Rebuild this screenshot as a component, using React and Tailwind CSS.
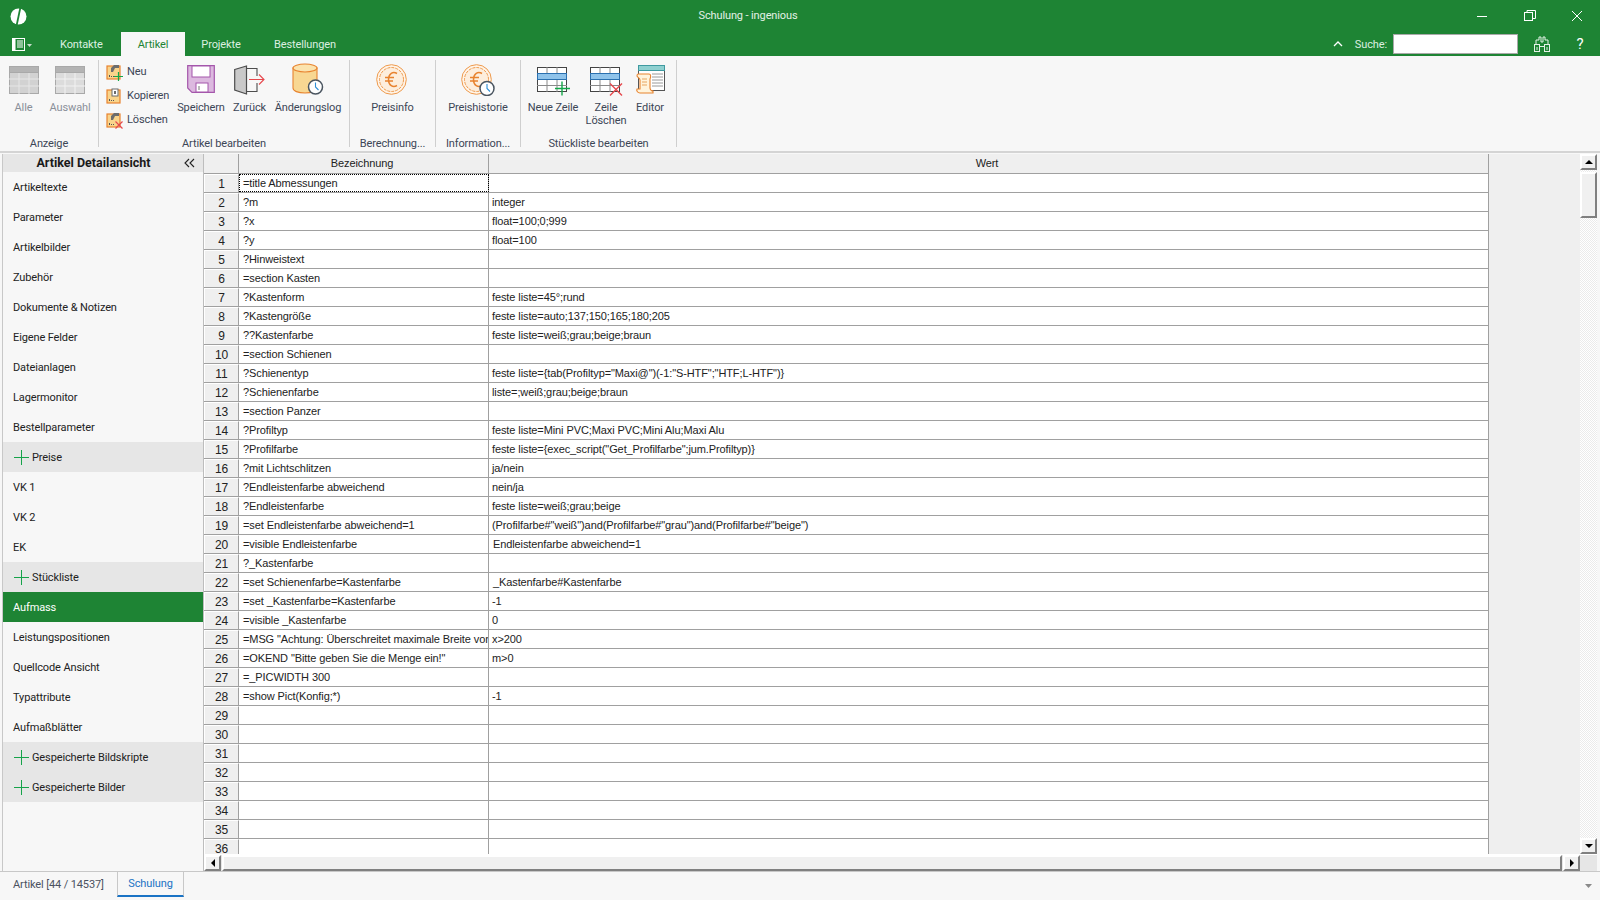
import React from "react";

const sideItems = [
  ["Artikeltexte"],["Parameter"],["Artikelbilder"],["Zubehör"],["Dokumente & Notizen"],["Eigene Felder"],["Dateianlagen"],["Lagermonitor"],["Bestellparameter"],
  ["Preise","g"],["VK 1"],["VK 2"],["EK"],["Stückliste","g"],["Aufmass","a"],["Leistungspositionen"],["Quellcode Ansicht"],["Typattribute"],["Aufmaßblätter"],["Gespeicherte Bildskripte","g"],["Gespeicherte Bilder","g"],
];

const rows = [
  ["=title Abmessungen",""],["?m","integer"],["?x","float=100;0;999"],["?y","float=100"],["?Hinweistext",""],["=section Kasten",""],["?Kastenform","feste liste=45°;rund"],["?Kastengröße","feste liste=auto;137;150;165;180;205"],["??Kastenfarbe","feste liste=weiß;grau;beige;braun"],["=section Schienen",""],
  ["?Schienentyp","feste liste={tab(Profiltyp=\"Maxi@\")(-1:\"S-HTF\";\"HTF;L-HTF\")}"],["?Schienenfarbe","liste=;weiß;grau;beige;braun"],["=section Panzer",""],["?Profiltyp","feste liste=Mini PVC;Maxi PVC;Mini Alu;Maxi Alu"],["?Profilfarbe","feste liste={exec_script(\"Get_Profilfarbe\";jum.Profiltyp)}"],["?mit Lichtschlitzen","ja/nein"],["?Endleistenfarbe abweichend","nein/ja"],["?Endleistenfarbe","feste liste=weiß;grau;beige"],["=set Endleistenfarbe abweichend=1","(Profilfarbe#\"weiß\")and(Profilfarbe#\"grau\")and(Profilfarbe#\"beige\")"],["=visible Endleistenfarbe"," Endleistenfarbe abweichend=1"],
  ["?_Kastenfarbe",""],["=set Schienenfarbe=Kastenfarbe"," _Kastenfarbe#Kastenfarbe"],["=set _Kastenfarbe=Kastenfarbe","-1"],["=visible _Kastenfarbe","0"],["=MSG \"Achtung: Überschreitet maximale Breite von","x>200"],["=OKEND \"Bitte geben Sie die Menge ein!\"","m>0"],["=_PICWIDTH 300",""],["=show Pict(Konfig;*)","-1"],
];
const allRows = Array.from({ length: 36 }, (_, i) => rows[i] || ["", ""]);

function GridIcon({ light }) {
  const f = light ? "#dcdcdc" : "#d2d2d2";
  return (
    <svg width="30" height="28" viewBox="0 0 30 28" className="mb-[2px]">
      <rect x="0.5" y="0.5" width="29" height="27" fill={f} stroke="#a9a9a9" />
      <rect x="0.5" y="0.5" width="29" height="6" fill="#b4b4b4" stroke="#a9a9a9" />
      <path d="M0 13h30M0 20h30M10 7v21M20 7v21" stroke={light ? "#f2f2f2" : "#e6e6e6"} strokeWidth="1" />
    </svg>
  );
}

function BoxIcon({ mark }) {
  return (
    <svg width="18" height="18" viewBox="0 0 18 18">
      <rect x="1" y="3" width="13" height="13" fill="#f9d48b" stroke="#e8832f" strokeWidth="1.2" />
      {mark === "copy" ? (
        <>
          <rect x="6" y="2" width="6" height="7" fill="#fff" stroke="#6b6b6b" />
          <rect x="8" y="4" width="2" height="3" fill="#6b6b6b" />
        </>
      ) : (
        <path d="M5 9V5l3-3h5v3H9L7 9z" fill="#6d6d6d" />
      )}
      <path d="M3.5 12v2M5.5 13v1M7.5 13v1" stroke="#555" strokeWidth="1" />
      {mark === "add" && <path d="M12.5 9v9M8 13.5h9" stroke="#14a84a" strokeWidth="1.2" />}
      {mark === "del" && <path d="M9.5 10.5l7 7M16.5 10.5l-7 7" stroke="#e6484d" strokeWidth="1.2" />}
    </svg>
  );
}

function SaveIcon() {
  return (
    <svg width="28" height="28" viewBox="0 0 28 28" className="mb-[3px]">
      <path d="M0.7 0.7h26.6v26.6H5l-4.3-4.3z" fill="#dcb9df" stroke="#a456ab" strokeWidth="1.2" />
      <rect x="5" y="1" width="18" height="11" fill="#fff" stroke="#a456ab" />
      <rect x="9" y="18" width="12" height="9" fill="#fff" stroke="#a456ab" />
      <path d="M12 21v4" stroke="#777" />
    </svg>
  );
}

function BackIcon() {
  return (
    <svg width="31" height="30" viewBox="0 0 31 30" className="mb-[1px]">
      <path d="M0.7 4.5L12.5 1v28L0.7 25z" fill="#c9c9c9" stroke="#4d4d4d" strokeWidth="1.2" />
      <path d="M13 3.5h10V11M23 18v8.5H13" fill="none" stroke="#4d4d4d" strokeWidth="1.1" />
      <path d="M15 14.5h15M25 9.5l5 5-5 5" fill="none" stroke="#e6484d" strokeWidth="1.1" />
    </svg>
  );
}

function Clock({ x, y, r = 7 }) {
  return (
    <g>
      <circle cx={x} cy={y} r={r} fill="#fff" stroke="#4a5560" strokeWidth="1.5" />
      <path d={`M${x} ${y - r + 2.5}v${r - 2.5}l3 3`} fill="none" stroke="#2f8fd6" strokeWidth="1.1" />
    </g>
  );
}

function DbIcon() {
  return (
    <svg width="32" height="33" viewBox="0 0 32 33">
      <path d="M1 5v20c0 3 5 5 12 5s12-2 12-5V5z" fill="#f8d792" stroke="#e8832f" strokeWidth="1.1" />
      <ellipse cx="13" cy="5" rx="12" ry="4" fill="#fbe3ae" stroke="#e8832f" strokeWidth="1.1" />
      <Clock x="23.5" y="24" r="7" />
    </svg>
  );
}

function EuroIcon({ clock }) {
  return (
    <svg width="34" height="32" viewBox="0 0 34 32">
      <circle cx="15.5" cy="15.5" r="14.8" fill="#fff4e8" stroke="#ee9a4d" strokeWidth="1" />
      <circle cx="15.5" cy="15.5" r="12" fill="#fdeedd" stroke="#ee9a4d" strokeWidth="1" strokeDasharray="3 1" />
      <path d="M21 9.5c-4-2.5-8.5 0-8.5 6s4.5 8.5 8.5 6M9 13.5h9M9 17h8" fill="none" stroke="#e8832f" strokeWidth="1.5" />
      {clock && <Clock x="26" y="24.5" r="7" />}
    </svg>
  );
}

function RowIcon({ del }) {
  return (
    <svg width="33" height="29" viewBox="0 0 33 29">
      <rect x="0.5" y="0.5" width="29" height="24" fill="#fff" stroke="#444" />
      <rect x="0.5" y="6.5" width="29" height="6" fill="#8fc3ea" stroke="#2a70b0" />
      <path d="M0 18.5h30M10 13v12M20 13v12M10 0v6M20 0v6" stroke="#8a8a8a" />
      {del ? <path d="M20 16.5l12 12M32 16.5l-12 12" stroke="#e6484d" strokeWidth="1.4" /> : <path d="M25 14.5v14M18 21.5h15" stroke="#14a84a" strokeWidth="1.4" />}
    </svg>
  );
}

function EditorIcon() {
  return (
    <svg width="31" height="30" viewBox="0 0 31 30" className="mb-[1px]">
      <rect x="3.5" y="0.5" width="26" height="25" fill="#fff" stroke="#555" />
      <rect x="3.5" y="0.5" width="26" height="5" fill="#8fd0d0" stroke="#3f9aa0" />
      <path d="M17 9h11M17 12h11M17 15h11M17 18h11M17 21h11" stroke="#9a9a9a" />
      <path d="M3 9h11c2 0 2 3 1 5v9c0 2 2 3 3 3v2H5c-2 0-4-2-3-4h3v-9c0-2-3-3-3-4s0-2 1-2z" fill="#fff4dc" stroke="#e8832f" strokeWidth="1.1" />
      <path d="M7 14h5M7 17h5M7 20h5" stroke="#e8a55f" />
    </svg>
  );
}

function BigBtn({ w, label, children, dim }) {
  return (
    <div className={`flex flex-col items-center shrink-0 pt-[2px] ${w}`}>
      <div className="h-[34px] flex items-end justify-center">{children}</div>
      <div className={`mt-[5px] text-center leading-[13px] whitespace-nowrap ${dim ? "text-[#8a8f99]" : "text-[#3c4656]"}`}>{label}</div>
    </div>
  );
}

function Group({ w, label, children }) {
  return (
    <div className={`${w} shrink-0 self-stretch flex flex-col border-r border-[#cfcfcf] mt-[4px] mb-[4px]`}>
      <div className="flex flex-1 min-h-0">{children}</div>
      <div className="h-[15px] -mb-[4px] text-center text-[#3c4656] leading-[15px] whitespace-nowrap">{label}</div>
    </div>
  );
}

function SmallBtn({ mark, label }) {
  return (
    <div className="h-[24px] flex items-center gap-[3px] text-[#3c4656]">
      <BoxIcon mark={mark} />
      <span>{label}</span>
    </div>
  );
}

function Btn3D({ className = "", children }) {
  return (
    <div className={`flex items-center justify-center bg-[#f0f0f0] border-2 border-t-white border-l-white border-r-[#808080] border-b-[#808080] shrink-0 ${className}`}>
      {children}
    </div>
  );
}

const Tri = ({ d }) => (
  <svg width="8" height="8" viewBox="0 0 8 8"><path d={d} fill="#000" /></svg>
);

export default function App() {
  return (
    <div className="w-[1600px] h-[900px] overflow-hidden flex flex-col bg-[#f7f7f7] text-[11px] tracking-[-0.12px] text-[#222]" style={{ fontFamily: '"Roboto","Liberation Sans",sans-serif' }}>
      {/* Title bar */}
      <div className="h-[32px] bg-[#1e8434] flex items-center text-white shrink-0">
        <div className="w-[386px] shrink-0 pl-[10px] flex items-center">
          <svg width="17" height="17" viewBox="0 0 17 17">
            <circle cx="8.5" cy="8.5" r="8" fill="#fff" />
            <path d="M10.5 -1L6.5 18" stroke="#1e8434" strokeWidth="1.8" />
          </svg>
        </div>
        <div className="flex-1 text-center text-[#e3f1e6]">Schulung - ingenious</div>
        <div className="w-[490px] shrink-0 flex items-center justify-end">
          <div className="w-[48px] flex justify-center">
            <svg width="12" height="12" viewBox="0 0 12 12"><path d="M1 6.5h10" stroke="#fff" /></svg>
          </div>
          <div className="w-[48px] flex justify-center">
            <svg width="12" height="12" viewBox="0 0 12 12" fill="none" stroke="#fff"><rect x="0.5" y="2.5" width="8" height="8" /><path d="M3 2.5V0.5h8.5v8H8.5" /></svg>
          </div>
          <div className="w-[46px] flex justify-center">
            <svg width="12" height="12" viewBox="0 0 12 12"><path d="M1 1l10 10M11 1L1 11" stroke="#fff" /></svg>
          </div>
        </div>
      </div>

      {/* Nav row */}
      <div className="h-[24px] bg-[#1e8434] flex items-stretch text-[#dcefe0] shrink-0">
        <div className="w-[60px] pl-[12px] flex items-center gap-[2px]">
          <svg width="13" height="13" viewBox="0 0 13 13"><rect x="0.5" y="0.5" width="12" height="12" fill="#1e8434" stroke="#fff" /><rect x="0.5" y="0.5" width="3" height="12" fill="#fff" /><path d="M5 3h6M5 5h6M5 7h6M5 9h6" stroke="#fff" /></svg>
          <svg width="5" height="3" viewBox="0 0 5 3" className="mt-[2px]"><path d="M0 0h5L2.5 3z" fill="#c7dccb" /></svg>
        </div>
        <div className="w-[61px] flex items-center pt-[2px]"><span>Kontakte</span></div>
        <div className="w-[64px] bg-[#f7f7f7] text-[#1e8434] flex items-center justify-center pt-[2px]">Artikel</div>
        <div className="w-[72px] flex items-center justify-center pt-[2px]">Projekte</div>
        <div className="w-[96px] flex items-center justify-center pt-[2px]">Bestellungen</div>
        <div className="flex-1 flex items-center justify-end">
          <svg width="10" height="6" viewBox="0 0 10 6" className="mr-[12px]"><path d="M1 5l4-4 4 4" fill="none" stroke="#fff" strokeWidth="1.3" /></svg>
          <span className="mr-[6px] pt-[2px]">Suche:</span>
          <div className="w-[125px] h-[20px] bg-white border border-[#a9a9a9] mr-[16px]" />
          <svg width="16" height="16" viewBox="0 0 16 16" fill="none" stroke="#e4f2e7" className="mr-[20px]"><rect x="0.5" y="8.5" width="5" height="7" /><rect x="10.5" y="8.5" width="5" height="7" /><path d="M2 8.5V4h3V1h2v5h2V1h2v3h3v4.5M5.5 10.5h5M3 11v3M13 11v3" /></svg>
          <span className="w-[20px] mr-[10px] text-center text-white text-[15px] leading-none">?</span>
        </div>
      </div>

      {/* Ribbon */}
      <div className="h-[97px] bg-[#f7f7f7] border-b-2 border-[#d4d4d4] flex shrink-0">
        <Group w="w-[99px]" label="Anzeige">
          <BigBtn w="w-[47px]" label="Alle" dim><GridIcon /></BigBtn>
          <BigBtn w="w-[46px]" label="Auswahl" dim><GridIcon light /></BigBtn>
        </Group>
        <Group w="w-[251px]" label="Artikel bearbeiten">
          <div className="pl-[7px] w-[77px] shrink-0">
            <SmallBtn mark="add" label="Neu" />
            <SmallBtn mark="copy" label="Kopieren" />
            <SmallBtn mark="del" label="Löschen" />
          </div>
          <BigBtn w="w-[50px]" label="Speichern"><SaveIcon /></BigBtn>
          <BigBtn w="w-[47px]" label="Zurück"><BackIcon /></BigBtn>
          <BigBtn w="w-[70px]" label="Änderungslog"><DbIcon /></BigBtn>
        </Group>
        <Group w="w-[86px]" label="Berechnung...">
          <div className="w-full flex justify-center"><BigBtn w="w-[60px]" label="Preisinfo"><EuroIcon /></BigBtn></div>
        </Group>
        <Group w="w-[85px]" label="Information...">
          <div className="w-full flex justify-center"><BigBtn w="w-[70px]" label="Preishistorie"><EuroIcon clock /></BigBtn></div>
        </Group>
        <Group w="w-[156px]" label="Stückliste bearbeiten">
          <div className="flex pl-[5px]">
            <BigBtn w="w-[54px]" label="Neue Zeile"><RowIcon /></BigBtn>
            <BigBtn w="w-[52px]" label={<>Zeile<br />Löschen</>}><RowIcon del /></BigBtn>
            <BigBtn w="w-[36px]" label="Editor"><EditorIcon /></BigBtn>
          </div>
        </Group>
      </div>

      {/* Main */}
      <div className="flex-1 min-h-0 flex pl-[2px] pr-[3px] pt-[1px]">
        {/* Sidebar */}
        <div className="w-[201px] shrink-0 border-l border-[#c8c8c8] flex flex-col">
          <div className="h-[18px] bg-[#e6e6e6] flex items-center text-[12.5px] tracking-normal font-bold text-[#1a1a1a] shrink-0">
            <span className="w-[181px] text-center">Artikel Detailansicht</span>
            <svg width="11" height="10" viewBox="0 0 11 10" fill="none" stroke="#222" strokeWidth="1.1"><path d="M5 1L1 5l4 4M10 1L6 5l4 4" /></svg>
          </div>
          {sideItems.map(([t, k]) => (
            <div key={t} className={`h-[30px] shrink-0 flex items-center ${k === "g" ? "bg-[#e6e6e6]" : ""} ${k === "a" ? "bg-[#1e8434] text-white" : ""} ${k === "g" ? "pl-[11px]" : "pl-[10px]"}`}>
              {k === "g" && (
                <svg width="15" height="15" viewBox="0 0 15 15" className="mr-[3px]"><path d="M7.5 0v15M0 7.5h15" stroke="#16a34a" strokeWidth="1" /></svg>
              )}
              <span className="pt-[2px]">{t}</span>
            </div>
          ))}
        </div>

        {/* Grid area */}
        <div className="flex-1 min-w-0 flex flex-col bg-[#efefef] border-l border-[#bdbdbd] text-[#222] tracking-[-0.1px]" style={{ fontFamily: '"Liberation Sans",sans-serif' }}>
          <div className="flex-1 min-h-0 flex">
            <div className="flex-1 min-w-0 overflow-hidden">
              <div className="w-[1285px] border-r border-[#a0a0a0] h-full overflow-hidden bg-white">
                <div className="flex h-[20px] bg-[#efefef] border-b border-[#a0a0a0]">
                  <div className="w-[35px] shrink-0 border-r border-[#a0a0a0]" />
                  <div className="w-[250px] shrink-0 border-r border-[#a0a0a0] flex items-center justify-center pr-[3px]">Bezeichnung</div>
                  <div className="flex-1 flex items-center justify-center pr-[3px]">Wert</div>
                </div>
                {allRows.map((r, i) => (
                  <div key={i} className="flex h-[19px] border-b border-[#a0a0a0]">
                    <div className="w-[35px] shrink-0 bg-[#efefef] border-r border-[#a0a0a0] flex items-center justify-center border-t border-l border-t-white border-l-white text-[12px]">{i + 1}</div>
                    <div className={`w-[250px] shrink-0 border-r border-[#a0a0a0] flex items-center pl-[4px] pr-[3px] overflow-hidden whitespace-nowrap ${i === 0 ? "outline-1 outline-dotted outline-black -outline-offset-1" : ""}`}>{r[0]}</div>
                    <div className={`flex-1 flex items-center whitespace-pre ${r[1].startsWith(" ") ? "pl-[1px]" : "pl-[3px]"}`}>{r[1]}</div>
                  </div>
                ))}
              </div>
            </div>
            {/* V scrollbar */}
            <div className="w-[17px] shrink-0 flex flex-col bg-[repeating-conic-gradient(#fff_0_25%,#ebebeb_0_50%)] bg-[length:2px_2px]">
              <Btn3D className="h-[16px] w-[17px] mb-[2px]"><Tri d="M4 2L8 6H0z" /></Btn3D>
              <Btn3D className="h-[46px] w-[17px]" />
              <div className="flex-1" />
              <Btn3D className="h-[16px] w-[17px]"><Tri d="M0 2h8L4 6z" /></Btn3D>
            </div>
          </div>
          {/* H scrollbar */}
          <div className="h-[17px] shrink-0 flex bg-[#e6e6e6] border-t border-white">
            <Btn3D className="w-[17px] h-[16px] mr-[1px]"><Tri d="M6 0v8L2 4z" /></Btn3D>
            <Btn3D className="flex-1 h-[16px]" />
            <Btn3D className="w-[17px] h-[16px] ml-[1px]"><Tri d="M2 0v8l4-4z" /></Btn3D>
            <div className="w-[17px] shrink-0" />
          </div>
        </div>
      </div>

      {/* Bottom tabs */}
      <div className="h-[29px] shrink-0 flex">
        <div className="flex-1 flex items-start border-t border-[#c8c8c8] pl-[2px]">
          <div className="w-[115px] h-[26px] flex items-center pl-[11px] text-[#4a5160]">Artikel [44 / 14537]</div>
          <div className="w-[67px] h-[26px] -mt-[1px] pt-[2px] border-x border-t border-[#c8c8c8] border-b-2 border-b-[#1a73c4] bg-[#f7f7f7] flex items-center justify-center text-[#1a73c4]">Schulung</div>
          <div className="flex-1 flex justify-end pr-[8px] pt-[12px]">
            <svg width="7" height="4" viewBox="0 0 7 4"><path d="M0 0h7L3.5 4z" fill="#8a8a8a" /></svg>
          </div>
        </div>
      </div>
    </div>
  );
}
